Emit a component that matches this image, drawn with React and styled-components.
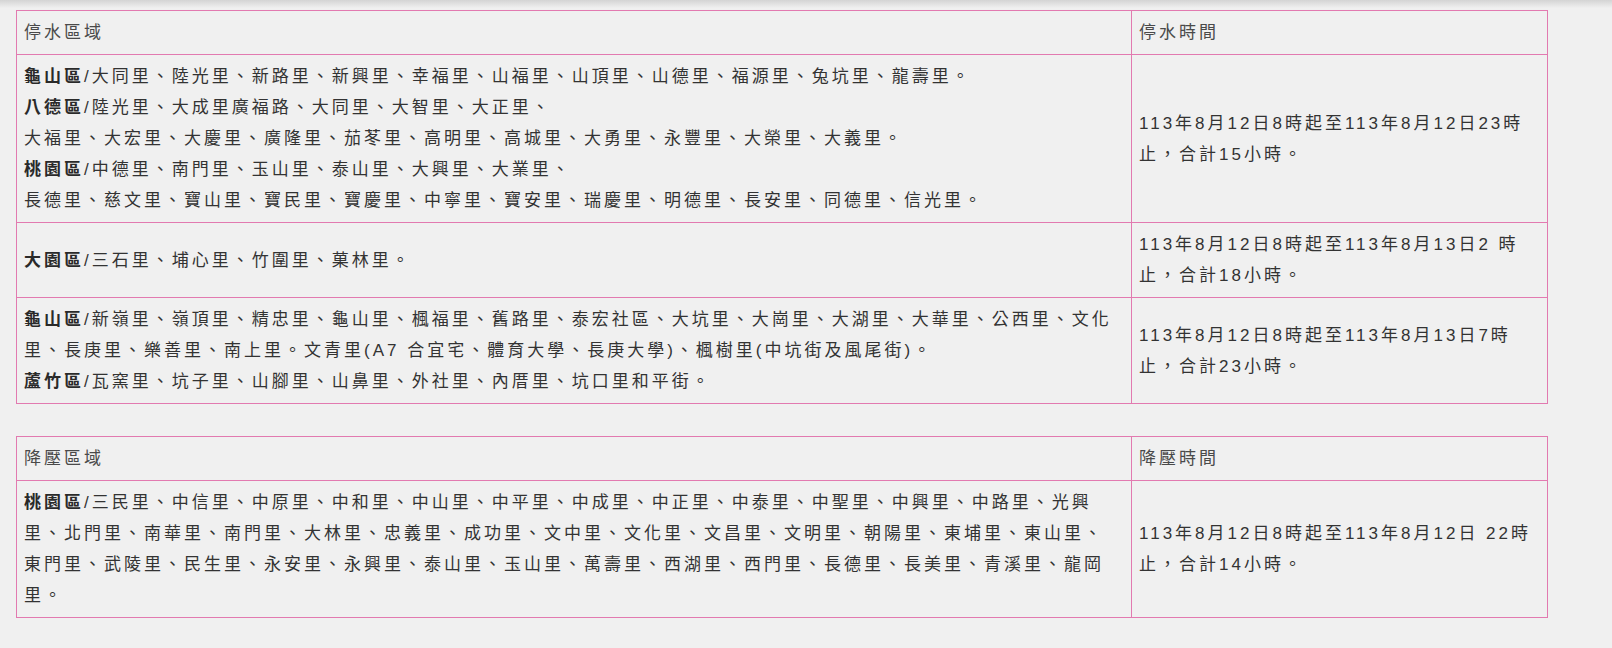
import React from 'react'
import styled, { createGlobalStyle } from 'styled-components'

const GlobalStyle = createGlobalStyle`
  html, body {
    margin: 0;
    padding: 0;
    background: #f0f0f0;
  }
  body {
    font-family: "Liberation Sans", "Noto Sans CJK TC", Arial, sans-serif;
    color: #333;
  }
`

const Shade = styled.div`
  height: 8px;
  background: linear-gradient(to bottom, #d4d4d4, #f0f0f0);
`

const Page = styled.main`
  padding: 2px 64px 20px 16px;
  display: flex;
  flex-direction: column;
  gap: 32px;
`

const Table = styled.table`
  width: 100%;
  border-collapse: collapse;
  table-layout: fixed;
  font-size: 17px;
  line-height: 31px;
  letter-spacing: 3px;
`

const Cell = styled.td`
  border: 1px solid #e27ab0;
  padding: 6px 4px 6px 7px;
  vertical-align: middle;
  text-align: left;
  font-weight: 400;
  color: ${p => (p.$head ? '#4a4a4a' : '#333')};
`

const District = styled.b`
  font-weight: 700;
  color: #2a2a2a;
`

const Line = styled.div``

const outage = [
  {
    area: (
      <>
        <Line><District>龜山區</District>/大同里、陸光里、新路里、新興里、幸福里、山福里、山頂里、山德里、福源里、兔坑里、龍壽里。</Line>
        <Line><District>八德區</District>/陸光里、大成里廣福路、大同里、大智里、大正里、</Line>
        <Line>大福里、大宏里、大慶里、廣隆里、茄苳里、高明里、高城里、大勇里、永豐里、大榮里、大義里。</Line>
        <Line><District>桃園區</District>/中德里、南門里、玉山里、泰山里、大興里、大業里、</Line>
        <Line>長德里、慈文里、寶山里、寶民里、寶慶里、中寧里、寶安里、瑞慶里、明德里、長安里、同德里、信光里。</Line>
      </>
    ),
    time: '113年8月12日8時起至113年8月12日23時止，合計15小時。',
  },
  {
    area: (
      <Line><District>大園區</District>/三石里、埔心里、竹圍里、菓林里。</Line>
    ),
    time: '113年8月12日8時起至113年8月13日2 時止，合計18小時。',
  },
  {
    area: (
      <>
        <Line><District>龜山區</District>/新嶺里、嶺頂里、精忠里、龜山里、楓福里、舊路里、泰宏社區、大坑里、大崗里、大湖里、大華里、公西里、文化<br />里、長庚里、樂善里、南上里。文青里(A7 合宜宅、體育大學、長庚大學)、楓樹里(中坑街及風尾街)。</Line>
        <Line><District>蘆竹區</District>/瓦窯里、坑子里、山腳里、山鼻里、外社里、內厝里、坑口里和平街。</Line>
      </>
    ),
    time: '113年8月12日8時起至113年8月13日7時止，合計23小時。',
  },
]

const pressure = [
  {
    area: (
      <Line>
        <District>桃園區</District>/三民里、中信里、中原里、中和里、中山里、中平里、中成里、中正里、中泰里、中聖里、中興里、中路里、光興<br />
        里、北門里、南華里、南門里、大林里、忠義里、成功里、文中里、文化里、文昌里、文明里、朝陽里、東埔里、東山里、<br />
        東門里、武陵里、民生里、永安里、永興里、泰山里、玉山里、萬壽里、西湖里、西門里、長德里、長美里、青溪里、龍岡<br />
        里。
      </Line>
    ),
    time: '113年8月12日8時起至113年8月12日 22時止，合計14小時。',
  },
]

function ScheduleTable({ areaTitle, timeTitle, rows }) {
  return (
    <Table>
      <colgroup>
        <col style={{ width: '1115px' }} />
        <col />
      </colgroup>
      <thead>
        <tr>
          <Cell as="th" $head>{areaTitle}</Cell>
          <Cell as="th" $head>{timeTitle}</Cell>
        </tr>
      </thead>
      <tbody>
        {rows.map((r, i) => (
          <tr key={i}>
            <Cell>{r.area}</Cell>
            <Cell>{r.time}</Cell>
          </tr>
        ))}
      </tbody>
    </Table>
  )
}

export default function App() {
  return (
    <>
      <GlobalStyle />
      <Shade />
      <Page>
        <ScheduleTable areaTitle="停水區域" timeTitle="停水時間" rows={outage} />
        <ScheduleTable areaTitle="降壓區域" timeTitle="降壓時間" rows={pressure} />
      </Page>
    </>
  )
}
